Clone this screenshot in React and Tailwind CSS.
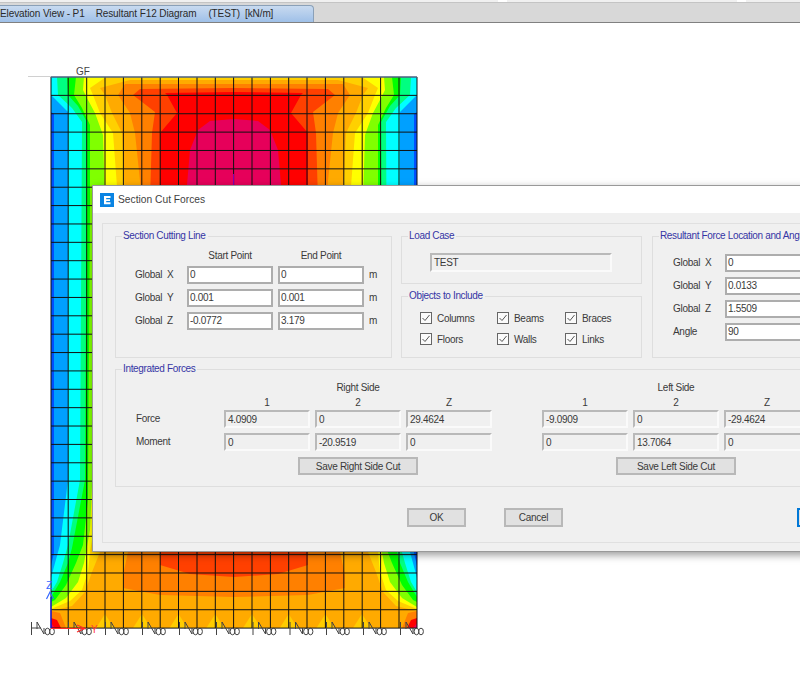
import React from "react";

const GRID_X = [51, 68.2, 86.7, 105, 123.4, 141.8, 160.2, 178.5, 197, 215.3, 233.6, 252, 270.4, 288.7, 307, 325.4, 343.8, 362.2, 380.6, 399, 417];
const GRID_Y = Array.from({ length: 31 }, (_, i) => 77 + i * 18.37);
const PIN_X = [37, 74, 111, 148, 185, 222, 258.5, 295.5, 332, 369, 406];
const SPIKE_X = [105, 142, 178.5, 215.3, 252, 288.7, 325.4, 362];

// contour bands, left half only, outermost first. mirrored around x=234
const BANDS = [
  ["#00a0ff", [[234, 77], [51, 77], [51, 112], [54, 114], [54, 520], [54, 553], [51, 566], [51, 628], [234, 628]]],
  ["#00ffff", [[234, 77], [51, 77], [51, 95], [68, 112], [68, 480], [60, 545], [55, 563], [51, 578], [51, 628], [234, 628]]],
  ["#00ff80", [[234, 77], [57, 77], [58, 95], [72, 108], [82, 122], [80, 480], [68, 545], [63, 563], [57, 582], [51, 592], [51, 628], [234, 628]]],
  ["#00ff00", [[234, 77], [67, 77], [68, 95], [78, 106], [87, 122], [85, 480], [72, 548], [68, 563], [60, 582], [51, 597], [51, 628], [234, 628]]],
  ["#80ff00", [[234, 77], [76, 77], [74, 95], [82, 108], [90, 125], [90, 200], [88, 500], [83, 545], [76, 563], [66, 585], [55, 600], [51, 602], [51, 628], [234, 628]]],
  ["#ffff00", [[234, 77], [84, 77], [83, 90], [88, 100], [95, 113], [103, 135], [105, 200], [90, 530], [86, 552], [84, 563], [78, 582], [66, 598], [51, 607], [51, 628], [234, 628]]],
  ["#ffd000", [[234, 77], [106, 77], [90, 88], [93, 95], [100, 113], [113, 133], [118, 200], [92, 540], [90, 552], [88, 572], [82, 590], [70, 601], [51, 609], [51, 628], [234, 628]]],
  ["#ffaa00", [[234, 80], [130, 80], [100, 88], [105, 95], [112, 113], [122, 133], [125, 200], [100, 552], [92, 572], [85, 592], [72, 606], [51, 611], [51, 628], [234, 628]]],
  ["#ff8000", [[234, 84], [125, 84], [118, 95], [130, 113], [135, 133], [142, 200], [128, 552], [123, 575], [123, 588], [160, 595], [234, 597]]],
  ["#ff4000", [[234, 88], [140, 89], [133, 95], [155, 112], [152, 133], [150, 200], [160, 552], [160, 565], [190, 574], [234, 577]]],
  ["#ff0000", [[234, 92], [165, 93], [167, 95], [177, 113], [160, 133], [160, 540], [234, 540]]],
  ["#e6005a", [[234, 119], [210, 121], [198, 130], [190, 150], [187, 185], [187, 400], [234, 400]]],
];

function mirrored(points) {
  const back = [...points].reverse().map(([x, y]) => [468 - x, y]);
  return [...points, ...back].map((p) => p.join(",")).join(" ");
}

function ContourPlot() {
  return (
    <svg width="420" height="590" viewBox="20 60 420 590" className="ml-[20px] mt-[37px] block">
      <rect x="51" y="77" width="366" height="551" fill="#0050ff" />
      {BANDS.map(([color, pts]) => (
        <polygon key={color} points={mirrored(pts)} fill={color} />
      ))}

      {/* bottom edge spikes and the hot corners */}
      {SPIKE_X.map((x) => (
        <polygon key={x} points={`${x - 9},628 ${x},614 ${x + 9},628`} fill="#ffcc00" />
      ))}
      <polygon points="51,611 60,613 66,628 51,628" fill="#ff8000" />
      <polygon points="51,618 57,620 61,628 51,628" fill="#ff0000" />
      <polygon points="51,623 55,628 51,628" fill="#e6005a" />
      <polygon points="417,611 408,613 402,628 417,628" fill="#ff8000" />
      <polygon points="417,618 411,620 407,628 417,628" fill="#ff0000" />
      <polygon points="417,623 413,628 417,628" fill="#e6005a" />

      {GRID_X.map((x) => (
        <line key={x} x1={x} y1="77" x2={x} y2="628" stroke="#111" strokeWidth="1" />
      ))}
      {GRID_Y.map((y) => (
        <line key={y} x1="51" y1={y} x2="417" y2={y} stroke="#111" strokeWidth="1" />
      ))}
      <line x1="51" y1="77" x2="417" y2="77" stroke="#6a86b8" strokeWidth="1" />
      <line x1="28" y1="76.5" x2="51" y2="76.5" stroke="#d0d0d0" strokeWidth="1" />
      <line x1="233.6" y1="174" x2="233.6" y2="186" stroke="#8a00c0" strokeWidth="1" />
      <text x="76" y="74.5" fontSize="10" fill="#444" fontFamily="Liberation Sans, sans-serif">GF</text>

      {/* joint symbols along the base */}
      {PIN_X.map((x) => (
        <g key={x} fill="none" stroke="#444" strokeWidth="1">
          <line x1={x - 5.5} y1="622" x2={x - 5.5} y2="635" />
          <polyline points={`${x},629 ${x},622 ${x + 7},634 ${x + 7},628`} />
          <ellipse cx={x + 10.5} cy="631.500" rx="2.400" ry="3.300" />
          <ellipse cx={x + 15} cy="631.500" rx="2.400" ry="3.300" />
        </g>
      ))}
      <line x1="32" y1="628" x2="41" y2="628" stroke="#444" strokeWidth="1" />

      {/* global axes */}
      <line x1="51" y1="628" x2="51" y2="597" stroke="#1a1aff" strokeWidth="1.2" />
      <polyline points="46.5,599 50,592 53.5,599" fill="none" stroke="#3366ff" strokeWidth="1.2" />
      <text x="46" y="589" fontSize="11" fill="#3366ff" fontFamily="Liberation Sans, sans-serif">Z</text>
      <line x1="51" y1="628.5" x2="84" y2="628.5" stroke="#ff2a2a" strokeWidth="1.2" />
      <polyline points="77,625 85,628.5 77,632" fill="none" stroke="#ff2a2a" strokeWidth="1.1" />
      <text x="91" y="633" fontSize="10" fill="#ff3b3b" fontFamily="Liberation Sans, sans-serif">Y</text>
    </svg>
  );
}

function TabBar() {
  return (
    <div className="h-[23px] relative">
      <div className="h-[3px] bg-[#f0f0f0] border-b border-[#c4c4c4] flex">
        <div className="ml-[498px] w-[9px] bg-white" />
        <div className="ml-[230px] w-[9px] bg-white" />
      </div>
      <div className="h-[20px] bg-[#d8d8d8] border-b border-[#808080] pt-[2px]">
        <div className="w-[315px] h-[17px] -ml-px flex bg-gradient-to-b from-[#c8daf0] to-[#9fc0e8] border border-b-0 border-[#8aa0b8] rounded-tr-[4px] text-[10px] tracking-[-0.1px] leading-[16px] text-[#2a2a2a] whitespace-pre overflow-hidden">
          <span>Elevation View - P1</span>
          <span className="ml-[11px]">Resultant F12 Diagram</span>
          <span className="ml-[12px]">(TEST)</span>
          <span className="ml-[5px]">[kN/m]</span>
        </div>
      </div>
    </div>
  );
}

function Group({ title, className, children }) {
  return (
    <div className={`relative shrink-0 border border-[#dedede] ${className}`}>
      <span className="absolute -top-[7px] left-[6px] bg-[#f0f0f0] pr-[2px] pl-px text-[10px] tracking-[-0.35px] leading-[12px] text-[#3535a5] whitespace-nowrap">
        {title}
      </span>
      {children}
    </div>
  );
}

function Input({ value, className = "w-[86px]" }) {
  return (
    <div className={`h-[18px] bg-white border-2 border-[#adadad] pl-[1px] leading-[14px] text-[#3a3a3a] ${className}`}>
      {value}
    </div>
  );
}

function ReadOnly({ value, className = "w-[86px] h-[18px]" }) {
  return (
    <div className={`border-2 border-t-[#b9b9b9] border-l-[#b9b9b9] border-r-[#fafafa] border-b-[#fafafa] pl-[2px] leading-[15px] text-[#3a3a3a] ${className}`}>
      {value}
    </div>
  );
}

function Check({ label }) {
  return (
    <div className="flex items-center gap-[5px] h-[12px]">
      <svg width="12" height="12" viewBox="0 0 12 12" className="shrink-0">
        <rect x="0.5" y="0.5" width="11" height="11" fill="#fafafa" stroke="#666" strokeWidth="1" />
        <polyline points="2.5,6 5,8.5 9.5,3" fill="none" stroke="#555" strokeWidth="1" />
      </svg>
      <span className="text-[#3a3a3a]">{label}</span>
    </div>
  );
}

function CoordRow({ label, value, end, unit }) {
  return (
    <>
      <span className="whitespace-pre leading-[18px] text-[#3a3a3a]">{label}</span>
      <Input value={value} />
      {end !== undefined && <Input value={end} />}
      {unit && <span className="leading-[18px] text-[#3a3a3a]">{unit}</span>}
    </>
  );
}

function Button({ children, className }) {
  return (
    <div className={`h-[18px] shrink-0 bg-[#e1e1e1] border-2 border-[#b8b8b8] flex items-center justify-center text-[#3a3a3a] ${className}`}>
      {children}
    </div>
  );
}

function SideForces({ title, force, moment, saveLabel }) {
  return (
    <div className="w-[268px] shrink-0">
      <div className="h-[15px] text-center leading-[15px] text-[#3a3a3a]">{title}</div>
      <div className="grid grid-cols-3 gap-x-[5px]">
        {["1", "2", "Z"].map((h) => (
          <div key={h} className="h-[15px] text-center leading-[15px] text-[#3a3a3a]">{h}</div>
        ))}
      </div>
      <div className="grid grid-cols-3 gap-x-[5px] gap-y-[5px]">
        {[...force, ...moment].map((v, i) => (
          <ReadOnly key={i} value={v} className="w-full h-[18px]" />
        ))}
      </div>
      <div className="mt-[6px] flex justify-center">
        <Button className="w-[120px]">{saveLabel}</Button>
      </div>
    </div>
  );
}

function SectionCutDialog() {
  return (
    <div className="absolute left-[92px] top-[185px] w-[760px] h-[367px] bg-[#f0f0f0] border border-[#999] shadow-[2px_3px_8px_rgba(0,0,0,0.4)] font-['Liberation_Sans',sans-serif] text-[10px] tracking-[-0.3px]">
      <div className="h-[27px] bg-white flex items-center pl-[7px] gap-[4px]">
        <svg width="14" height="14" viewBox="0 0 14 14">
          <rect width="14" height="14" fill="#0a84e3" />
          <path d="M4 3h6.5v2H6.2v1.2h3.8v1.8H6.2V9.200h4.300v2H4z" fill="#fff" />
        </svg>
        <span className="text-[10.25px] tracking-normal text-[#3f3f3f]">Section Cut Forces</span>
      </div>

      <div className="ml-[9px] mt-[10px] w-[760px] h-[320px] border border-[#e0e0e0] pl-[12px] pt-[12px]">
        <div className="flex">
          <Group title="Section Cutting Line" className="w-[277px] h-[122px] pl-[19px] pt-[13px]">
            <div className="grid grid-cols-[47px_86px_86px_auto] gap-x-[5px] gap-y-[5px]">
              <span />
              <span className="text-center leading-[11px] text-[#3a3a3a]">Start Point</span>
              <span className="text-center leading-[11px] text-[#3a3a3a]">End Point</span>
              <span />
              <CoordRow label="Global  X" value="0" end="0" unit="m" />
              <CoordRow label="Global  Y" value="0.001" end="0.001" unit="m" />
              <CoordRow label="Global  Z" value="-0.0772" end="3.179" unit="m" />
            </div>
          </Group>

          <div className="ml-[9px] w-[241px] shrink-0">
            <Group title="Load Case" className="h-[48px] pl-[28px] pt-[16px]">
              <ReadOnly value="TEST" className="w-[182px] h-[19px]" />
            </Group>
            <Group title="Objects to Include" className="h-[62px] mt-[12px] pl-[18px] pt-[15px]">
              <div className="grid grid-cols-[77px_68px_auto] gap-y-[9px]">
                <Check label="Columns" />
                <Check label="Beams" />
                <Check label="Braces" />
                <Check label="Floors" />
                <Check label="Walls" />
                <Check label="Links" />
              </div>
            </Group>
          </div>

          <Group title="Resultant Force Location and Angle" className="ml-[10px] w-[200px] h-[122px] pl-[20px] pt-[17px]">
            <div className="grid grid-cols-[47px_86px] gap-x-[5px] gap-y-[5px]">
              <CoordRow label="Global  X" value="0" />
              <CoordRow label="Global  Y" value="0.0133" />
              <CoordRow label="Global  Z" value="1.5509" />
              <CoordRow label="Angle" value="90" />
            </div>
          </Group>
        </div>

        <Group title="Integrated Forces" className="mt-[11px] w-[720px] h-[118px] pt-[10px] pl-[20px] flex">
          <div className="w-[88px] shrink-0 pt-[30px] text-[#3a3a3a]">
            <div className="h-[18px] leading-[18px]">Force</div>
            <div className="h-[18px] mt-[5px] leading-[18px]">Moment</div>
          </div>
          <SideForces
            title="Right Side"
            force={["4.0909", "0", "29.4624"]}
            moment={["0", "-20.9519", "0"]}
            saveLabel="Save Right Side Cut"
          />
          <div className="w-[50px] shrink-0" />
          <SideForces
            title="Left Side"
            force={["-9.0909", "0", "-29.4624"]}
            moment={["0", "13.7064", "0"]}
            saveLabel="Save Left Side Cut"
          />
        </Group>

        <div className="mt-[21px] ml-[292px] flex">
          <Button className="w-[59px] h-[19px]">OK</Button>
          <Button className="w-[59px] h-[19px] ml-[38px]">Cancel</Button>
          <div className="ml-[234px] w-[59px] h-[19px] shrink-0 border-2 border-[#0078d7] bg-[#e1e1e1]" />
        </div>
      </div>
    </div>
  );
}

export default function App() {
  return (
    <div className="relative w-[800px] h-[683px] overflow-hidden bg-white font-['Liberation_Sans',sans-serif]">
      <TabBar />
      <ContourPlot />
      <SectionCutDialog />
    </div>
  );
}
